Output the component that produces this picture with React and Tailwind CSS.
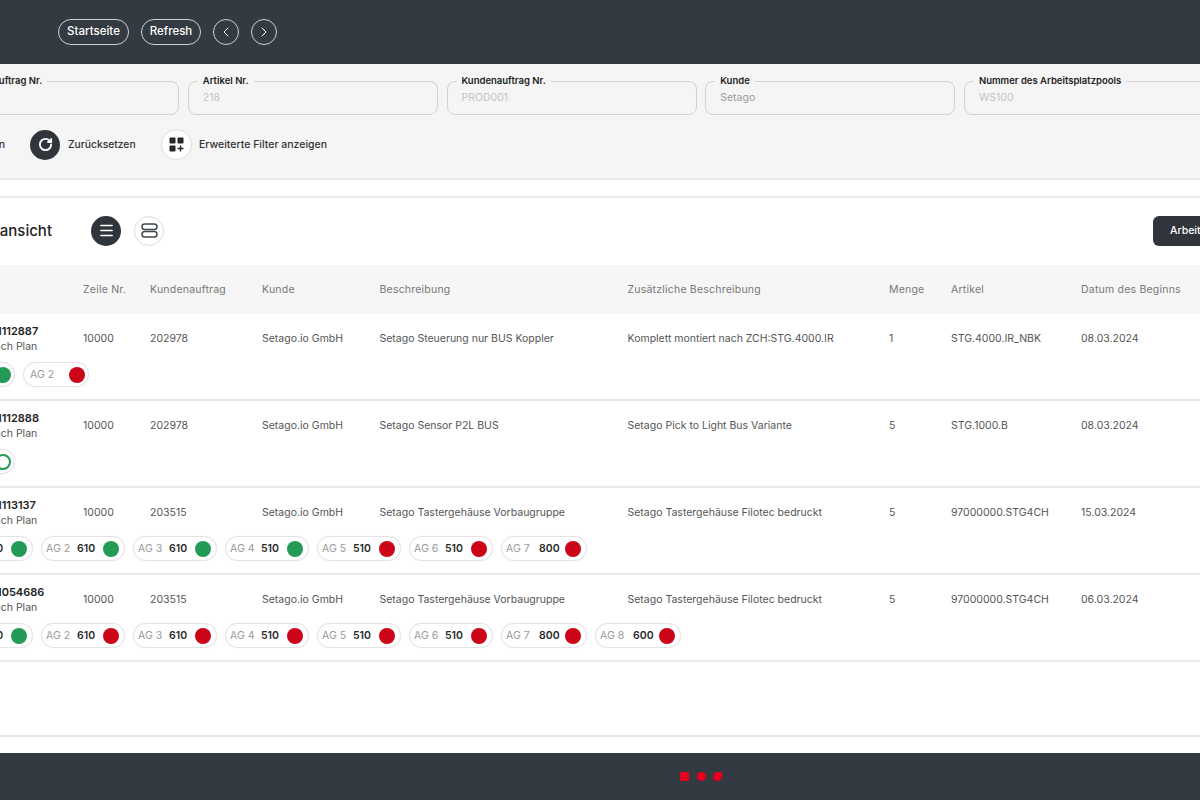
import { ChevronLeft, ChevronRight, Menu, RotateCw } from 'lucide-react';

const filters = [
  { label: 'Fertigungsauftrag Nr.', value: '', tone: 'text-[#c4c4c4]' },
  { label: 'Artikel Nr.', value: '218', tone: 'text-[#c4c4c4]' },
  { label: 'Kundenauftrag Nr.', value: 'PROD001', tone: 'text-[#c4c4c4]' },
  { label: 'Kunde', value: 'Setago', tone: 'text-[#9a9a9a]' },
  { label: 'Nummer des Arbeitsplatzpools', value: 'WS100', tone: 'text-[#c4c4c4]' },
];

const columns = ['', 'Zeile Nr.', 'Kundenauftrag', 'Kunde', 'Beschreibung', 'Zusätzliche Beschreibung', 'Menge', 'Artikel', 'Datum des Beginns'];

const rows = [
  {
    order: 'PA-00001112887', line: '10000', sales: '202978',
    desc: 'Setago Steuerung nur BUS Koppler', extra: 'Komplett montiert nach ZCH:STG.4000.IR',
    qty: '1', item: 'STG.4000.IR_NBK', date: '08.03.2024',
    steps: [{ name: 'AG 1', state: 'green' }, { name: 'AG 2', state: 'red' }],
  },
  {
    order: 'PA-00001112888', line: '10000', sales: '202978',
    desc: 'Setago Sensor P2L BUS', extra: 'Setago Pick to Light Bus Variante',
    qty: '5', item: 'STG.1000.B', date: '08.03.2024',
    steps: [{ name: 'AG 1', state: 'open' }],
  },
  {
    order: 'PA-00001113137', line: '10000', sales: '203515',
    desc: 'Setago Tastergehäuse Vorbaugruppe', extra: 'Setago Tastergehäuse Filotec bedruckt',
    qty: '5', item: '97000000.STG4CH', date: '15.03.2024',
    steps: [
      { name: 'AG 1', code: '610', state: 'green' },
      { name: 'AG 2', code: '610', state: 'green' },
      { name: 'AG 3', code: '610', state: 'green' },
      { name: 'AG 4', code: '510', state: 'green' },
      { name: 'AG 5', code: '510', state: 'red' },
      { name: 'AG 6', code: '510', state: 'red' },
      { name: 'AG 7', code: '800', state: 'red' },
    ],
  },
  {
    order: 'PA-00001054686', line: '10000', sales: '203515',
    desc: 'Setago Tastergehäuse Vorbaugruppe', extra: 'Setago Tastergehäuse Filotec bedruckt',
    qty: '5', item: '97000000.STG4CH', date: '06.03.2024',
    steps: [
      { name: 'AG 1', code: '610', state: 'green' },
      { name: 'AG 2', code: '610', state: 'red' },
      { name: 'AG 3', code: '610', state: 'red' },
      { name: 'AG 4', code: '510', state: 'red' },
      { name: 'AG 5', code: '510', state: 'red' },
      { name: 'AG 6', code: '510', state: 'red' },
      { name: 'AG 7', code: '800', state: 'red' },
      { name: 'AG 8', code: '600', state: 'red' },
    ],
  },
];

const gridCols = 'grid w-[1320px] -ml-[51px] grid-cols-[134px_67px_112px_117.5px_248px_261.5px_62px_130px_1fr]';

const dotStyles = {
  green: 'bg-[#239a55]',
  red: 'bg-[#cc0418]',
  open: 'bg-white border-2 border-[#239a55]',
};

function StepPill({ step }) {
  const wide = step.code === '800' || step.code === '600';
  if (!step.code) {
    return (
      <div className="flex h-[25px] w-[66px] shrink-0 items-center justify-between rounded-full border border-[#e2e2e2] pl-[6px] pr-[3px] shadow-[0_0_1px_#ddd]">
        <span className="text-[10.5px] text-[#999]">{step.name}</span>
        <span className={`h-4 w-4 rounded-full ${dotStyles[step.state]}`} />
      </div>
    );
  }
  return (
    <div className={`flex h-[25px] shrink-0 items-center rounded-full border border-[#e2e2e2] pl-[4px] pr-[5px] shadow-[0_0_1px_#ddd] ${wide ? 'w-[86px]' : 'w-[84px]'}`}>
      <span className={`text-[10.5px] text-[#999] ${wide ? 'w-[33px]' : 'w-[31px]'}`}>{step.name}</span>
      <span className="w-[26px] text-[10.5px] font-semibold text-[#2a2a2a]">{step.code}</span>
      <span className={`ml-auto h-4 w-4 rounded-full ${dotStyles[step.state]}`} />
    </div>
  );
}

function TableRow({ row }) {
  const cells = [row.line, row.sales, 'Setago.io GmbH', row.desc, row.extra, row.qty, row.item, row.date];
  return (
    <div className="h-[87px] border-b-2 border-[#e9e9e9]">
      <div className={gridCols}>
        <div className="pt-[9px] leading-4">
          <div className="whitespace-nowrap text-[11px] font-semibold text-[#222]">{row.order}</div>
          <div className="whitespace-nowrap text-[10.5px] text-[#555]">Auftrag nach Plan</div>
        </div>
        {cells.map((cell, i) => (
          <div key={i} className="whitespace-nowrap pt-[17px] text-[10.5px] leading-4 text-[#555]">{cell}</div>
        ))}
      </div>
      <div className="-ml-[51px] mt-[7px] flex gap-2">
        {row.steps.map((step) => (
          <StepPill key={step.name} step={step} />
        ))}
      </div>
    </div>
  );
}

function FilterField({ filter }) {
  return (
    <fieldset className="h-[39.5px] w-[250px] shrink-0 rounded-lg border-[1.5px] border-[#d2d2d2] pl-[14px]">
      <legend className="-ml-[5px] px-[5px] text-[9.5px] font-semibold leading-3 text-[#222]">{filter.label}</legend>
      <div className={`pt-[3px] text-[10.5px] leading-4 ${filter.tone}`}>{filter.value}</div>
    </fieldset>
  );
}

export default function App() {
  return (
    <div className="h-[800px] w-[1200px] overflow-hidden bg-white font-['Inter','Liberation_Sans',sans-serif]">
      <header className="flex h-16 items-center gap-3 bg-[#343a41] pl-[58px]">
        <button className="h-[26px] w-[71px] rounded-full border border-[#cfd1d3] text-[11.5px] font-medium text-white">Startseite</button>
        <button className="h-[26px] w-[60px] rounded-full border border-[#cfd1d3] text-[11.5px] font-medium text-white">Refresh</button>
        <button className="flex h-[26px] w-[26px] items-center justify-center rounded-full border border-[#cfd1d3] text-white">
          <ChevronLeft size={16} strokeWidth={1.5} />
        </button>
        <button className="flex h-[26px] w-[26px] items-center justify-center rounded-full border border-[#cfd1d3] text-white">
          <ChevronRight size={16} strokeWidth={1.5} />
        </button>
      </header>

      <section className="h-[116px] border-b-2 border-[#e9e9e9] bg-[#f5f5f5] pt-[11px]">
        <div className="-ml-[71px] flex gap-[8.75px]">
          {filters.map((filter) => (
            <FilterField key={filter.label} filter={filter} />
          ))}
        </div>
        <div className="mt-[14.5px] flex h-[31px] items-center">
          <span className="-ml-[33px] w-[63px] shrink-0 text-[10.5px] font-medium text-[#333]">Suchen</span>
          <span className="flex h-[30px] w-[30px] shrink-0 items-center justify-center rounded-full bg-[#2f353b] text-white">
            <RotateCw size={15} strokeWidth={3} />
          </span>
          <span className="ml-2 w-[93px] shrink-0 text-[10.3px] font-medium text-[#333]">Zurücksetzen</span>
          <span className="flex h-[31px] w-[31px] shrink-0 items-center justify-center rounded-full border border-[#dcdcdc] bg-white">
            <svg width="15" height="15" viewBox="0 0 15 15" fill="#23282d">
              <rect x="0.5" y="0.5" width="6" height="6" rx="1" />
              <rect x="8.5" y="0.5" width="6" height="6" rx="1" />
              <rect x="0.5" y="8.5" width="6" height="6" rx="1" />
              <path d="M11.5 8.5v6M8.5 11.5h6" stroke="#23282d" strokeWidth="1.4" fill="none" />
            </svg>
          </span>
          <span className="ml-[7px] shrink-0 text-[10.5px] font-medium text-[#333]">Erweiterte Filter anzeigen</span>
        </div>
      </section>

      <section className="mt-4 border-t-2 border-[#ebebeb]">
        <div className="flex h-[67px] items-center">
          <h2 className="-ml-[100px] w-[152px] shrink-0 whitespace-nowrap text-right text-[15px] font-medium text-[#222]">Arbeitsgangansicht</h2>
          <span className="mb-[2px] ml-[39px] flex h-[30px] w-[30px] shrink-0 items-center justify-center rounded-full bg-[#2f353b] text-white">
            <Menu size={17} />
          </span>
          <span className="mb-[2px] ml-[13px] flex h-[30px] w-[30px] shrink-0 items-center justify-center rounded-full border border-[#dedede]">
            <svg width="17" height="15" viewBox="0 0 17 15" fill="none" stroke="#40454a" strokeWidth="1.5">
              <rect x="1" y="1" width="15" height="5.5" rx="2.75" />
              <rect x="1" y="8.5" width="15" height="5.5" rx="2.75" />
            </svg>
          </span>
          <button className="mb-[2px] ml-[989px] h-[30px] w-[107px] shrink-0 whitespace-nowrap rounded-md bg-[#2f353b] pl-[17px] text-left text-[10.5px] font-medium text-white">
            Arbeitsplatz
          </button>
        </div>

        <div className="h-[49px] bg-[#f6f6f6]">
          <div className={gridCols}>
            {columns.map((col) => (
              <div key={col} className="whitespace-nowrap text-[10.5px] leading-[50px] tracking-[0.02em] text-[#777]">{col}</div>
            ))}
          </div>
        </div>

        {rows.map((row) => (
          <TableRow key={row.order} row={row} />
        ))}
      </section>

      <div className="mt-[73px] border-t-2 border-[#e9e9e9]" />

      <footer className="mt-[16px] flex h-[47px] items-center bg-[#343a41] pl-[680px]">
        <span className="h-[9px] w-[9px] bg-[#e8001f]" />
        <span className="ml-[7.5px] h-[9px] w-[9px] rounded-full bg-[#e8001f]" />
        <span className="ml-[7.5px] h-[9px] w-[9px] rounded-full rounded-tr-none bg-[#e8001f]" />
      </footer>
    </div>
  );
}
